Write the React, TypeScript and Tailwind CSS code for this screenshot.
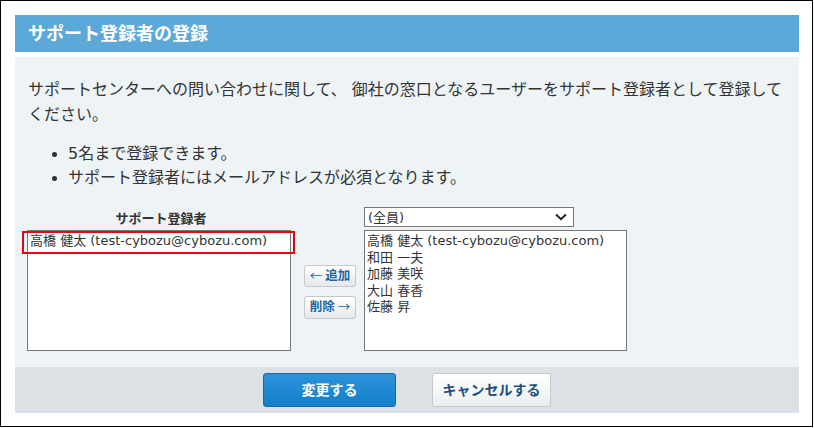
import React from "react";

const FONT = { fontFamily: '"DejaVu Sans", "Noto Sans CJK JP", sans-serif' };
const ARROW = { fontFamily: '"Noto Sans CJK JP", sans-serif' };

const members = [
  "高橋 健太 (test-cybozu@cybozu.com)",
  "和田 一夫",
  "加藤 美咲",
  "大山 春香",
  "佐藤 昇",
];

export default function App() {
  return (
    <div style={FONT} className="w-[813px] h-[427px] border border-black bg-white pl-[14px] pt-[14px] text-[#333]">
      <div className="w-[784px]">
        <div className="h-[37px] bg-[#5ca9d9] flex items-center pl-[13px]">
          <h1 className="text-white font-bold text-[18px] leading-none">サポート登録者の登録</h1>
        </div>
        <div className="mt-[5px] h-[310px] bg-[#eef3f6] pt-[20px]">
          <p className="pl-[13px] pr-[13px] text-[16px] leading-[25px]">
            サポートセンターへの問い合わせに関して、 御社の窓口となるユーザーをサポート登録者として登録してください。
          </p>
          <ul className="mt-[15px] text-[16px] leading-[24px]">
            <li className="flex items-center">
              <span className="ml-[37px] w-[5px] h-[5px] rounded-full bg-[#333]" />
              <span className="ml-[11px]">5名まで登録できます。</span>
            </li>
            <li className="flex items-center">
              <span className="ml-[37px] w-[5px] h-[5px] rounded-full bg-[#333]" />
              <span className="ml-[11px]">サポート登録者にはメールアドレスが必須となります。</span>
            </li>
          </ul>
          <div className="mt-[17px] pl-[12px] flex items-start">
            <div className="w-[264px] flex flex-col">
              <div className="h-[23px] flex items-center justify-center pl-[4px]">
                <span className="text-[13px] font-bold leading-none">サポート登録者</span>
              </div>
              <div className="relative h-[121px] border border-[#777] bg-white px-[2px] py-[2px] text-[13px] leading-[16.5px]">
                <div>{members[0]}</div>
                <div className="absolute left-[-6px] top-[0px] w-[273px] h-[23px] border-2 border-[#e60012]" />
              </div>
            </div>
            <div className="ml-[13px] mt-[58px] w-[52px] flex flex-col gap-[9px]">
              <button className="h-[22px] rounded-[3px] border border-[#c6c9cc] bg-gradient-to-b from-white to-[#e6e8ea] text-[12.5px] font-bold text-[#1c67a6] leading-none flex items-center justify-center gap-[3px]">
                <span style={ARROW} className="font-normal">←</span>
                <span>追加</span>
              </button>
              <button className="h-[23px] rounded-[3px] border border-[#c6c9cc] bg-gradient-to-b from-white to-[#e6e8ea] text-[12.5px] font-bold text-[#1c67a6] leading-none flex items-center justify-center gap-[3px]">
                <span>削除</span>
                <span style={ARROW} className="font-normal">→</span>
              </button>
            </div>
            <div className="ml-[8px] w-[263px] flex flex-col">
              <div className="w-[210px] h-[20px] border border-[#777] bg-white flex items-center justify-between pl-[3px] pr-[6px] text-[13px] leading-none">
                <span>(全員)</span>
                <svg width="12" height="8" viewBox="0 0 12 8">
                  <path d="M1 1.5 L6 6.2 L11 1.5" fill="none" stroke="#222" strokeWidth="2" />
                </svg>
              </div>
              <div className="mt-[3px] h-[121px] border border-[#777] bg-white px-[2px] py-[2px] text-[13px] leading-[16.5px]">
                {members.map((m) => (
                  <div key={m}>{m}</div>
                ))}
              </div>
            </div>
          </div>
        </div>
        <div className="h-[46px] bg-[#dde1e5] flex items-center justify-center gap-[36px]">
          <button className="w-[133px] h-[34px] rounded-[3px] border border-[#1868a6] bg-gradient-to-b from-[#2c93da] to-[#137fcb] text-white font-bold text-[14px] leading-none">
            変更する
          </button>
          <button className="w-[119px] h-[34px] rounded-[3px] border border-[#c4c8cc] bg-gradient-to-b from-white to-[#eceeef] text-[#1b4e7e] font-bold text-[14px] leading-none">
            キャンセルする
          </button>
        </div>
      </div>
    </div>
  );
}
